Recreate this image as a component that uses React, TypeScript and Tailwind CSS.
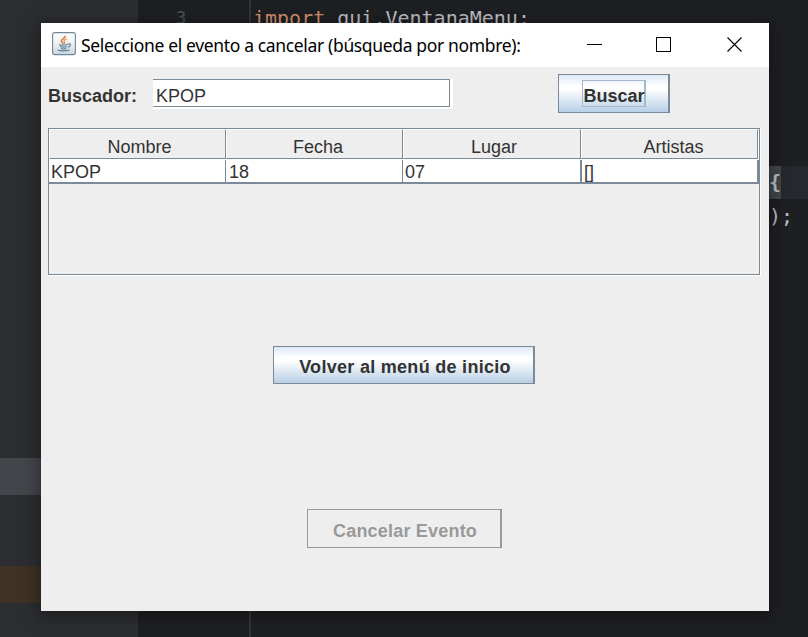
import type { ReactNode } from "react";

function JavaIcon() {
  return (
    <svg width="24" height="24" viewBox="0 0 24 24" className="shrink-0" fill="none">
      <defs>
        <linearGradient id="tile" x1="0" y1="0" x2="0" y2="1">
          <stop offset="0" stopColor="#ffffff" />
          <stop offset="0.5" stopColor="#eef1f4" />
          <stop offset="1" stopColor="#c9d6e0" />
        </linearGradient>
      </defs>
      <rect x="0.6" y="0.6" width="22.8" height="22" rx="2" fill="url(#tile)" stroke="#748694" strokeWidth="1.1" />
      <path d="M13 3.800c1.200 2-4 3.300-3.600 5.300.2 1 1.500 1.700 1.800 2.900" stroke="#e07b35" strokeWidth="1.600" />
      <path d="M14.800 7c-2.200.8-3.500 1.800-2.400 3.100.6.700.3 1.300-.1 1.800" stroke="#e58a4a" strokeWidth="1.200" />
      <path d="M7.500 12.300c-1.500.9 5 1.300 8.500-.1M8 14.500c1.600.9 5.500.9 7.200 0M9 16.400c1.400.6 4 .6 5.300 0" stroke="#5f8199" strokeWidth="1.200" />
      <path d="M16 12c3.300-1 3 2.400-.1 3.100" stroke="#5f8199" strokeWidth="1.200" />
      <path d="M6.500 17.500c-2 1.500 8 2 11 .2" stroke="#5f8199" strokeWidth="1.200" />
    </svg>
  );
}

function TitleBar() {
  return (
    <header className="flex h-11 items-center bg-white pl-[11px]">
      <div className="-mt-[3px]"><JavaIcon /></div>
      <h1 className="ml-[5px] w-[442px] whitespace-nowrap font-['Noto_Sans',sans-serif] text-[17.5px] leading-[24px] tracking-[-0.35px] text-black">
        Seleccione el evento a cancelar (búsqueda por nombre):
      </h1>
      <svg width="160" height="20" viewBox="0 0 160 20" className="ml-[64px] shrink-0" stroke="black" fill="none" shapeRendering="crispEdges">
        <path d="M0 9.500h15M69.500 2.500h14v14h-14z" />
        <path d="M140.500 2.500l14 14M154.500 2.500l-14 14" shapeRendering="auto" strokeWidth="1.100" />
      </svg>
    </header>
  );
}

const columns = [
  { name: "Nombre", value: "KPOP", head: "w-[177px] pl-[4px]", cell: "w-[177px] border-r pl-[2px]" },
  { name: "Fecha", value: "18", head: "w-[177px] pl-[7px]", cell: "w-[177px] border-r pl-[3px]" },
  { name: "Lugar", value: "07", head: "w-[178px] pl-[4px]", cell: "w-[179px] border-r-2 pl-[2px]" },
  { name: "Artistas", value: "[]", head: "w-[177px] pl-[8px]", cell: "w-[177px] border-r-2 pl-[2px]" },
];

function EventTable() {
  return (
    <div className="ml-[7px] mt-[15px] h-[148px] w-[713px] border-b border-r border-white">
      <div className="h-[147px] w-[712px] border border-[#7a8a99]">
        <div className="flex h-[31px] bg-white">
          {columns.map((c) => (
            <div
              key={c.name}
              className={`flex h-[30px] items-center justify-center border-b border-l border-r border-t border-b-[#7a8a99] border-l-white border-r-[#7a8a99] border-t-white bg-[#eee] pt-[5px] ${c.head}`}
            >
              {c.name}
            </div>
          ))}
        </div>
        <div className="flex h-[24px] border-b-2 border-[#7a8a99] bg-white">
          {columns.map((c) => (
            <div key={c.name} className={`flex items-center border-[#7a8a99] pt-[2px] ${c.cell}`}>
              {c.value}
            </div>
          ))}
        </div>
      </div>
    </div>
  );
}

function MetalButton({ className, children }: { className: string; children: ReactNode }) {
  return (
    <button
      className={`flex items-center justify-center whitespace-nowrap border border-r-2 border-[#7a8a99] bg-[linear-gradient(to_bottom,#dde8f3_0%,#ffffff_30%,#ffffff_38%,#b8cfe5_100%)] font-bold ${className}`}
    >
      {children}
    </button>
  );
}

function EventWindow() {
  return (
    <main className="absolute left-[41px] top-[23px] h-[588px] w-[728px] bg-[#eee] font-['Liberation_Sans',Arial,sans-serif] text-[18px] leading-[20px] text-[#333] shadow-[0_3px_14px_3px_rgba(0,0,0,0.35)]">
      <TitleBar />
      <div className="flex h-[46px] items-start pl-[7px] pt-[7px]">
        <label className="mt-[12px] w-[105px] whitespace-nowrap font-bold">Buscador:</label>
        <div className="mt-[5px] h-[30px] w-[300px] bg-white">
          <div className="h-[28px] w-[297px] border-b border-r border-t border-[#7a8a99] pl-[3px] pt-[6px]">KPOP</div>
        </div>
        <MetalButton className="ml-[105px] h-[39px] w-[112px]">
          <span className="flex h-[27px] w-[64px] items-center border border-r-2 border-[#a3b8cc] pl-[1px] pt-[4px]">Buscar</span>
        </MetalButton>
      </div>
      <EventTable />
      <MetalButton className="ml-[232px] mt-[70px] h-[38px] w-[262px] pl-[3px] pt-[4px] tracking-[0.29px]">Volver al menú de inicio</MetalButton>
      <button disabled className="ml-[266px] mt-[125px] flex h-[39px] w-[195px] items-center justify-center whitespace-nowrap border border-r-2 border-[#999] pl-[2px] pt-[4px] font-bold tracking-[0.2px] text-[#999]">
        Cancelar Evento
      </button>
    </main>
  );
}

export default function App() {
  return (
    <div className="relative flex h-[637px] w-[808px] overflow-hidden bg-[#1e1f22]">
      <aside className="h-full w-[138px] bg-[#2b2d30] pt-[458px]">
        <div className="h-[37px] bg-[#43454a]" />
        <div className="mt-[71px] h-[37px] bg-[#3d3223]" />
      </aside>
      <section className="flex h-full min-w-0 flex-1 font-['DejaVu_Sans_Mono',monospace] text-[20px] leading-[24px] text-[#bcbec4]">
        <div className="w-[113px] border-r-2 border-[#313438] pl-[38px] pt-[6px] text-[17px] text-[#4b5059]">3</div>
        <div className="min-w-0 flex-1">
          <pre className="h-[166px] pl-[2px] pt-[6px] font-[inherit]"><span className="text-[#cf8e6d]">import</span> gui.VentanaMenu;</pre>
          <div className="flex h-[33px] justify-end bg-[#26282e] pr-[27px]"><span className="bg-[#43454a] pt-[4px] font-bold">{"{"}</span></div>
          <pre className="pr-[15px] pt-[5px] text-right font-[inherit]">);</pre>
        </div>
      </section>
      <EventWindow />
    </div>
  );
}
